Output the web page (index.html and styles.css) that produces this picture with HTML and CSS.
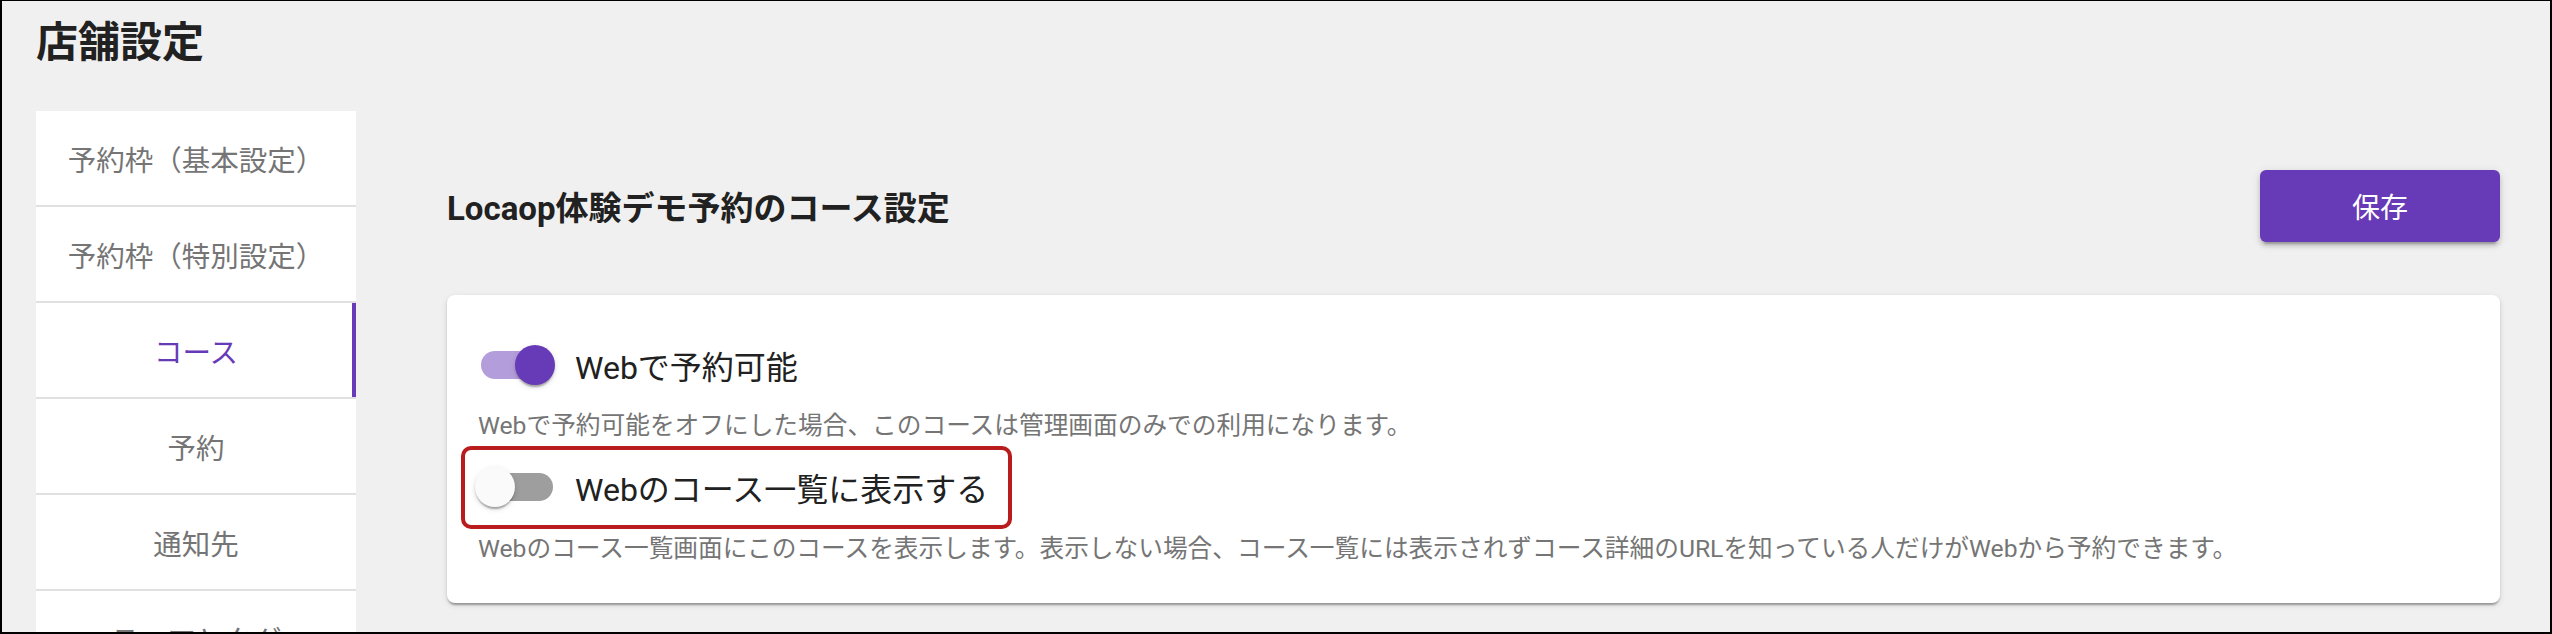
FILE: index.html
```html
<!DOCTYPE html>
<html lang="ja">
<head>
  <meta charset="UTF-8">
  <title>店舗設定</title>
  <link rel="stylesheet" href="styles.css">
</head>
<body>

  <div class="frame">
    <h1>店舗設定</h1>

    <div class="layout">
      <div class="menu">
        <div class="menu-item">予約枠（基本設定）</div>
        <div class="menu-item">予約枠（特別設定）</div>
        <div class="menu-item active">コース</div>
        <div class="menu-item">予約</div>
        <div class="menu-item">通知先</div>
        <div class="menu-item">テーマとタグ</div>
      </div>

      <div class="main">
        <div class="main-head">
          <h2>Locaop体験デモ予約のコース設定</h2>
          <button class="save-btn">保存</button>
        </div>

        <div class="card">
          <div class="switch-row">
            <span class="switch on"><span class="track"></span><span class="thumb"></span></span>
            <span class="switch-label">Webで予約可能</span>
          </div>
          <p class="hint">Webで予約可能をオフにした場合、このコースは管理画面のみでの利用になります。</p>

          <div class="switch-row marked">
            <span class="switch"><span class="track"></span><span class="thumb"></span></span>
            <span class="switch-label">Webのコース一覧に表示する</span>
          </div>
          <p class="hint">Webのコース一覧画面にこのコースを表示します。表示しない場合、コース一覧には表示されずコース詳細のURLを知っている人だけがWebから予約できます。</p>
        </div>
      </div>
    </div>
  </div>

</body>
</html>
```

FILE: styles.css
```css
body {
  margin: 0;
  font-family: Roboto, "Noto Sans CJK JP", sans-serif;
  color: #212121;
}

.frame {
  height: 634px;
  box-sizing: border-box;
  border: 2px solid #000;
  border-top-width: 1px;
  background-color: #f0f0f0;
  padding: 17px 50px 0 34px;
  overflow: hidden;
}

h1 {
  margin: 0;
  font-size: 42px;
  line-height: 50px;
  font-weight: bold;
}

.layout {
  display: flex;
  gap: 91px;
  margin-top: 43px;
  align-items: flex-start;
}

.menu {
  width: 320px;
  flex-shrink: 0;
  background-color: #fff;
}

.menu-item {
  height: 94px;
  border-bottom: 2px solid #e0e0e0;
  display: flex;
  align-items: center;
  justify-content: center;
  font-size: 28.5px;
  color: #757575;
}

.menu-item.active {
  color: #673ab7;
  box-shadow: inset -4px 0 0 #673ab7;
}

.main {
  flex: 1;
}

.main-head {
  display: flex;
  align-items: center;
  justify-content: space-between;
  margin-top: 59px;
}

h2 {
  margin: 0;
  font-size: 33px;
  font-weight: bold;
}

.save-btn {
  width: 240px;
  height: 72px;
  border: none;
  border-radius: 6px;
  background-color: #673ab7;
  color: #fff;
  font-family: inherit;
  font-size: 28px;
  font-weight: normal;
  box-shadow: 0 6px 2px -4px rgba(0,0,0,.2), 0 4px 4px rgba(0,0,0,.14), 0 2px 10px rgba(0,0,0,.12);
}

.card {
  margin-top: 53px;
  background-color: #fff;
  border-radius: 8px;
  padding: 46px 28px 36px;
  box-shadow: 0 4px 2px -2px rgba(0,0,0,.2), 0 2px 2px rgba(0,0,0,.14), 0 2px 6px rgba(0,0,0,.12);
}

.switch-row {
  display: flex;
  align-items: center;
  gap: 20px;
  height: 48px;
}

.switch {
  position: relative;
  width: 80px;
  height: 40px;
  flex-shrink: 0;
}

.track {
  position: absolute;
  left: 6px;
  top: 6px;
  width: 72px;
  height: 28px;
  border-radius: 14px;
  background-color: #9e9e9e;
}

.thumb {
  position: absolute;
  left: 0;
  top: 0;
  width: 40px;
  height: 40px;
  border-radius: 50%;
  background-color: #fafafa;
  box-shadow: 0 4px 2px -2px rgba(0,0,0,.2), 0 2px 2px rgba(0,0,0,.14), 0 2px 6px rgba(0,0,0,.12);
}

.switch.on .track {
  background-color: #b39ddb;
}

.switch.on .thumb {
  left: 40px;
  background-color: #673ab7;
}

.switch-label {
  font-size: 32px;
}

.hint {
  margin: 19px 0 0;
  padding-left: 3px;
  font-size: 24.7px;
  line-height: 36px;
  color: #757575;
}

.marked {
  width: fit-content;
  margin: 2px 0 2px -14px;
  padding: 13px 20px 14px 10px;
  border: 4px solid #b91c1c;
  border-radius: 10px;
}

.marked + .hint {
  margin-top: 2px;
}
```
